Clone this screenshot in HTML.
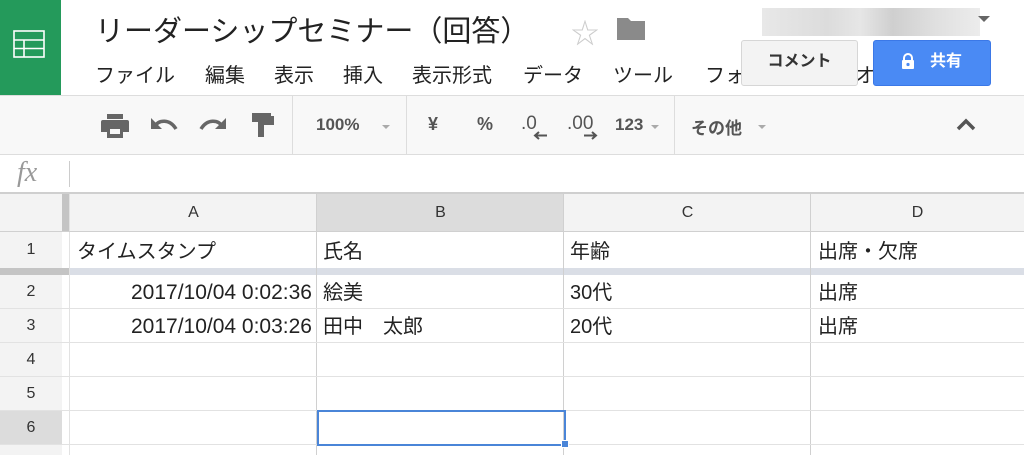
<!DOCTYPE html>
<html><head><meta charset="utf-8"><style>
*{margin:0;padding:0;box-sizing:border-box}
body{width:1024px;height:455px;overflow:hidden;background:#fff;font-family:"Liberation Sans","Noto Sans CJK JP",sans-serif;position:relative;color:#222}
.a{position:absolute}
.menu span{position:absolute;top:0;font-size:20px;color:#222;white-space:nowrap}
.tb{font-size:17px;font-weight:bold;color:#555}
.gl{background:#e2e2e2}
.cell{position:absolute;font-size:20px;color:#222;white-space:nowrap}
.ts{font-size:21px}
.rh{position:absolute;left:0;width:62px;text-align:center;font-size:16px;color:#333}
.ch{position:absolute;top:193px;height:39px;line-height:40px;text-align:center;font-size:16px;color:#333}
</style></head><body>
<div class="a" style="left:0;top:0;width:61px;height:95px;background:#249a5b"></div>
<svg class="a" style="left:13px;top:30px" width="32" height="28" viewBox="0 0 32 28"><g fill="none" stroke="#fff" stroke-width="1.6"><rect x="1" y="1" width="30" height="26"/><line x1="1" y1="10" x2="31" y2="10"/><line x1="1" y1="18.5" x2="31" y2="18.5"/><line x1="11" y1="10" x2="11" y2="27"/></g></svg>
<div class="a" style="left:95px;top:8px;font-size:29px;color:#222;white-space:nowrap">リーダーシップセミナー（回答）</div>
<div class="a" style="left:571px;top:12px;font-size:28px;color:#ccc">☆</div>
<svg class="a" style="left:617px;top:16px" width="28" height="24" viewBox="0 0 28 24"><path d="M0 2h11l3 3h14v19H0z" fill="#8a8a8a"/></svg>
<div class="a" style="left:762px;top:8px;width:218px;height:28px;background:linear-gradient(90deg,#e8e8e8,#dcdcdc 30%,#e6e6e6 45%,#cfcfcf 60%,#e0e0e0 80%,#ececec)"></div>
<div class="a" style="left:978px;top:16px;width:0;height:0;border-left:6px solid transparent;border-right:6px solid transparent;border-top:6px solid #666"></div>
<div class="menu a" style="left:95px;top:59px;width:800px;height:30px">
<span style="left:0">ファイル</span><span style="left:110px">編集</span><span style="left:179px">表示</span><span style="left:248px">挿入</span><span style="left:317px">表示形式</span><span style="left:428px">データ</span><span style="left:518px">ツール</span><span style="left:610px">フォ</span><span style="left:760px">オ</span></div>
<div class="a" style="left:741px;top:40px;width:117px;height:46px;background:#f3f3f3;border:1px solid #d6d6d6;border-radius:3px;text-align:center;line-height:42px;font-size:16px;font-weight:bold;color:#333">コメント</div>
<div class="a" style="left:873px;top:40px;width:118px;height:46px;background:#4a8af4;border:1px solid #3b78e7;border-radius:3px;color:#fff;font-size:16px;font-weight:bold;line-height:42px;padding-left:56px">共有</div>
<svg class="a" style="left:901px;top:53px" width="14" height="16" viewBox="0 0 14 16"><path d="M3 7V5a4 4 0 0 1 8 0v2" fill="none" stroke="#fff" stroke-width="2"/><rect x="1" y="7" width="12" height="9" rx="1" fill="#fff"/><circle cx="7" cy="11.5" r="1.6" fill="#4a8af4"/></svg>
<div class="a" style="left:0;top:95px;width:1024px;height:60px;background:#f8f8f8;border-top:1px solid #ddd;border-bottom:1px solid #ddd"></div>
<div class="a" style="left:292px;top:96px;width:1px;height:58px;background:#ddd"></div>
<div class="a" style="left:406px;top:96px;width:1px;height:58px;background:#ddd"></div>
<div class="a" style="left:674px;top:96px;width:1px;height:58px;background:#ddd"></div>
<svg class="a" style="left:101px;top:114px" width="28" height="24" viewBox="0 0 28 24"><rect x="6" y="0" width="16" height="5" fill="#666"/><path d="M0 8a2 2 0 0 1 2-2h24a2 2 0 0 1 2 2v10h-6v6H6v-6H0z" fill="#666"/><rect x="9" y="15" width="10" height="5" fill="#f8f8f8"/></svg>
<svg class="a" style="left:150px;top:115px" width="28" height="18" viewBox="0 0 28 18"><path d="M4 12C9 4 20 4 26 14" fill="none" stroke="#666" stroke-width="3.5"/><path d="M1 3v11h11z" fill="#666"/></svg>
<svg class="a" style="left:199px;top:115px" width="28" height="18" viewBox="0 0 28 18"><path d="M24 12C19 4 8 4 2 14" fill="none" stroke="#666" stroke-width="3.5"/><path d="M27 3v11H16z" fill="#666"/></svg>
<svg class="a" style="left:252px;top:113px" width="22" height="24" viewBox="0 0 22 24"><rect x="0" y="0" width="19" height="9" fill="#666"/><path d="M19 3h3v9H10v12H6V9h12" fill="#666"/><rect x="8" y="11" width="4" height="13" fill="#666"/></svg>
<div class="a tb" style="left:316px;top:115px">100%</div>
<div class="a" style="left:382px;top:125px;border-left:4px solid transparent;border-right:4px solid transparent;border-top:4px solid #aaa"></div>
<div class="a tb" style="left:428px;top:114px;font-size:18px">¥</div>
<div class="a tb" style="left:477px;top:114px;font-size:18px">%</div>
<div class="a tb" style="left:521px;top:113px;font-weight:normal;font-size:19px">.0</div>
<svg class="a" style="left:533px;top:131px" width="14" height="9" viewBox="0 0 14 9"><path d="M14 4.5H3M6 1L2 4.5 6 8" fill="none" stroke="#555" stroke-width="2"/></svg>
<div class="a tb" style="left:567px;top:113px;font-weight:normal;font-size:19px">.00</div>
<svg class="a" style="left:584px;top:131px" width="14" height="9" viewBox="0 0 14 9"><path d="M0 4.5h11M8 1l4 3.5L8 8" fill="none" stroke="#555" stroke-width="2"/></svg>
<div class="a tb" style="left:615px;top:115px">123</div>
<div class="a" style="left:651px;top:125px;border-left:4px solid transparent;border-right:4px solid transparent;border-top:4px solid #aaa"></div>
<div class="a tb" style="left:691px;top:114px">その他</div>
<div class="a" style="left:758px;top:125px;border-left:4px solid transparent;border-right:4px solid transparent;border-top:4px solid #aaa"></div>
<svg class="a" style="left:956px;top:117px" width="20" height="14" viewBox="0 0 20 14"><path d="M2 12L10 4l8 8" fill="none" stroke="#555" stroke-width="3.5"/></svg>
<div class="a" style="left:17px;top:157px;font-family:'Liberation Serif',serif;font-style:italic;font-size:28px;color:#999">fx</div>
<div class="a" style="left:69px;top:161px;width:1px;height:26px;background:#ccc"></div>
<div class="a" style="left:0;top:192px;width:1024px;height:2px;background:#cfcfcf"></div>
<div class="a" style="left:0;top:194px;width:1024px;height:38px;background:#f3f3f3"></div>
<div class="a" style="left:317px;top:194px;width:247px;height:38px;background:#dcdcdc"></div>
<div class="a" style="left:0;top:232px;width:62px;height:223px;background:#f3f3f3"></div>
<div class="a" style="left:0;top:411px;width:62px;height:34px;background:#dcdcdc"></div>
<div class="a" style="left:62px;top:194px;width:7px;height:38px;background:#c4c4c4"></div>
<div class="a" style="left:0;top:268px;width:69px;height:7px;background:#c4c4c4"></div>
<div class="a" style="left:69px;top:268px;width:955px;height:7px;background:#dadee6"></div>
<div class="a gl" style="left:69px;top:194px;width:1px;height:261px"></div>
<div class="a gl" style="left:316px;top:194px;width:1px;height:261px;background:#d0d0d0"></div>
<div class="a gl" style="left:563px;top:194px;width:1px;height:261px;background:#d0d0d0"></div>
<div class="a gl" style="left:810px;top:194px;width:1px;height:261px;background:#d0d0d0"></div>
<div class="a gl" style="left:0;top:231px;width:1024px;height:1px;background:#d0d0d0"></div>
<div class="a gl" style="left:0;top:308px;width:1024px;height:1px"></div>
<div class="a gl" style="left:0;top:342px;width:1024px;height:1px"></div>
<div class="a gl" style="left:0;top:376px;width:1024px;height:1px"></div>
<div class="a gl" style="left:0;top:410px;width:1024px;height:1px"></div>
<div class="a gl" style="left:0;top:444px;width:1024px;height:1px"></div>
<div class="ch" style="left:70px;width:247px">A</div>
<div class="ch" style="left:317px;width:247px">B</div>
<div class="ch" style="left:564px;width:247px">C</div>
<div class="ch" style="left:811px;width:213px">D</div>
<div class="rh" style="top:241px">1</div>
<div class="rh" style="top:283px">2</div>
<div class="rh" style="top:317px">3</div>
<div class="rh" style="top:351px">4</div>
<div class="rh" style="top:385px">5</div>
<div class="rh" style="top:419px">6</div>
<div class="cell" style="left:77px;top:235px">タイムスタンプ</div>
<div class="cell" style="left:323px;top:235px">氏名</div>
<div class="cell" style="left:570px;top:235px">年齢</div>
<div class="cell" style="left:818px;top:235px">出席・欠席</div>
<div class="cell ts" style="left:70px;width:242px;text-align:right;top:281px">2017/10/04 0:02:36</div>
<div class="cell" style="left:323px;top:276px">絵美</div>
<div class="cell" style="left:570px;top:276px">30代</div>
<div class="cell" style="left:818px;top:276px">出席</div>
<div class="cell ts" style="left:70px;width:242px;text-align:right;top:315px">2017/10/04 0:03:26</div>
<div class="cell" style="left:323px;top:310px">田中　太郎</div>
<div class="cell" style="left:570px;top:310px">20代</div>
<div class="cell" style="left:818px;top:310px">出席</div>
<div class="a" style="left:317px;top:410px;width:249px;height:36px;border:2px solid #4a85d8"></div>
<div class="a" style="left:561px;top:440px;width:8px;height:8px;background:#4a85d8;border:1px solid #fff"></div>
</body></html>
